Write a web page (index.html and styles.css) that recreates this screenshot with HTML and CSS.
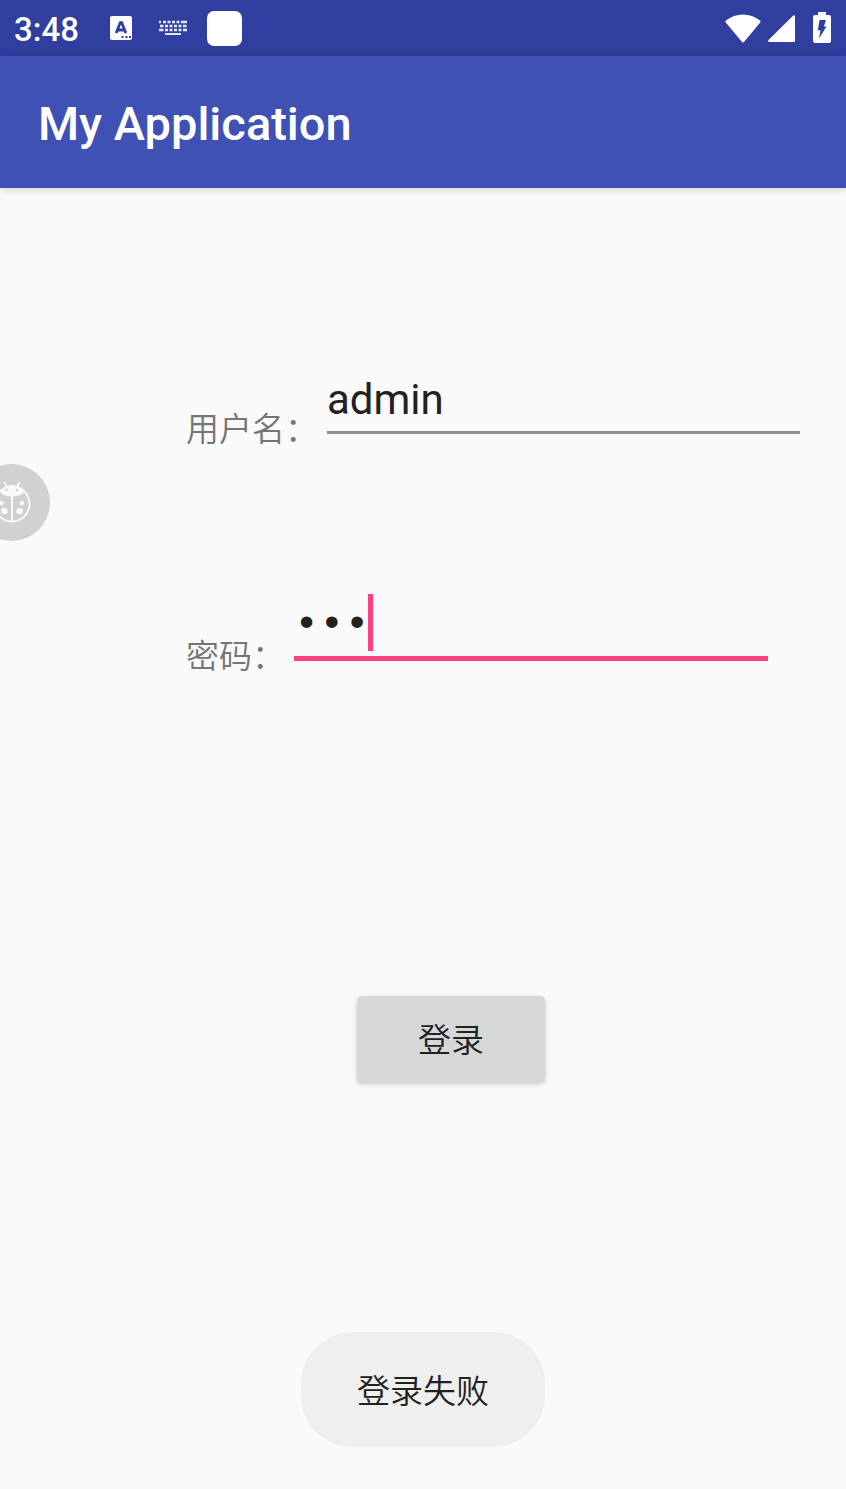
FILE: index.html
```html
<!DOCTYPE html>
<html lang="zh-CN">
<head>
<meta charset="utf-8">
<meta name="viewport" content="width=device-width, initial-scale=1">
<title>My Application</title>
<link rel="stylesheet" href="styles.css">
</head>
<body>
<div class="screen">
  <div class="status-bar">
    <time class="clock">3:48</time>
    <div class="notifications">
      <svg class="icon-a" width="24" height="26" viewBox="0 0 24 26" aria-hidden="true">
        <rect x="1" y="1" width="22" height="24" rx="2" fill="#fff"/>
        <path d="M7.200 18 11.300 7.600h1.400L16.800 18M8.700 15h6.600" fill="none" stroke="#303f9f" stroke-width="2.800"/>
        <path d="M12.500 21h2v2h-2zM16.500 21h2v2h-2zM20 21h2v2h-2z" fill="#303f9f"/>
      </svg>
      <svg class="icon-keyboard" width="28" height="16" viewBox="0 0 28 16" aria-hidden="true">
        <path d="M0 2h2M4 2h3M8.500 2h3M13 2h3M17.500 2h3M22 2h6M1 6h3.500M6 6h3M10.500 6h3M15 6h3M19.500 6h3M24 6h3.500M0 10h4.500M6 10h3M10.500 10h3M15 10h3M19.500 10h3M24 10h4" fill="none" stroke="#e4e6f4" stroke-width="2.600"/>
        <path d="M6 14h16" stroke="#e4e6f4" stroke-width="2"/>
      </svg>
      <span class="icon-square"></span>
    </div>
    <div class="system-icons">
      <svg class="icon-wifi" width="36" height="29" viewBox="0 0 36 29" aria-hidden="true">
        <path d="M1 6.500C10.500-1.500 25.500-1.500 35 6.500q1 1 .2 2L19.200 27.800q-1.200 1.200-2.400 0L.8 8.500q-.8-1 .2-2z" fill="#fff"/>
      </svg>
      <svg class="icon-signal" width="28" height="28" viewBox="0 0 28 28" aria-hidden="true">
        <path d="M1 27q-1.500-.5-.5-2L25 .8q2-1.200 2 .8v24.400q0 1-1 1z" fill="#fff"/>
      </svg>
      <svg class="icon-battery" width="18" height="31" viewBox="0 0 18 31" aria-hidden="true">
        <path d="M5 0h8v3h3q2 0 2 2v24q0 2-2 2H2q-2 0-2-2V5q0-2 2-2h3z" fill="#fff"/>
        <path d="M6.500 8h6.400l-2 6.500h2.600L6 26.500l1.500-8.200H4.800z" fill="#303f9f"/>
      </svg>
    </div>
  </div>
  <header class="app-bar"><h1 class="app-title">My Application</h1></header>
  <form class="login-form">
    <div class="field">
      <label class="field-label" for="username">用户名：</label>
      <div class="field-control"><input class="field-input" id="username" type="text" value="admin"></div>
    </div>
    <div class="field">
      <label class="field-label" for="password">密码：</label>
      <div class="field-control">
        <input class="field-input field-input-active" id="password" type="password" value="123">
        <span class="cursor"></span>
      </div>
    </div>
    <button class="login-button" type="button">登录</button>
  </form>
  <button class="debug-bubble" type="button" aria-label="Debug">
    <svg width="40" height="44" viewBox="0 0 40 44" aria-hidden="true">
      <circle cx="20" cy="23" r="17.500" fill="none" stroke="#fafafa" stroke-width="2"/>
      <path d="M12 1l3.500 5M28 1l-3.500 5" stroke="#fafafa" stroke-width="1.600"/>
      <path d="M8 11C11 2 29 2 32 11 27 17 13 17 8 11z" fill="#fafafa"/>
      <path d="M20 14v27" stroke="#fafafa" stroke-width="2"/>
      <circle cx="14.500" cy="9" r="1.300" fill="#d1d1d1"/><circle cx="25" cy="9" r="1.300" fill="#d1d1d1"/>
      <g fill="#fafafa"><circle cx="9.500" cy="22" r="2.300"/><circle cx="30" cy="22" r="2.300"/><circle cx="12.500" cy="30" r="3.200"/><circle cx="27.500" cy="30" r="3.200"/></g>
    </svg>
  </button>
  <div class="toast" role="status">登录失败</div>
</div>
</body>
</html>
```

FILE: styles.css
```css
* {
  box-sizing: border-box;
}

body {
  margin: 0;
  background: #fafafa;
  color: #212121;
  font-family: Roboto, "Noto Sans CJK SC", sans-serif;
}

.screen {
  position: relative;
  min-height: 100vh;
  overflow: hidden;
}

.status-bar {
  display: flex;
  align-items: center;
  height: 56px;
  padding: 0 15px 0 14px;
  background: #303f9f;
  color: #fff;
}

.clock {
  font-size: 33px;
  font-weight: 500;
  line-height: 40px;
  padding-top: 4px;
}

.notifications {
  display: flex;
  align-items: center;
  margin-left: 30px;
}

.icon-keyboard {
  margin: 0 20px 0 26px;
}

.icon-square {
  width: 35px;
  height: 35px;
  border-radius: 7px;
  background: #fff;
}

.system-icons {
  display: flex;
  align-items: flex-end;
  margin-left: auto;
  padding-bottom: 2px;
}

.icon-signal {
  margin: 0 17px 0 7px;
}

.app-bar {
  display: flex;
  align-items: center;
  height: 132px;
  padding: 4px 38px 0;
  background: #3f51b5;
  color: #fff;
  box-shadow: 0 1px 8px rgba(0, 0, 0, 0.2);
}

.app-title {
  margin: 0;
  font-size: 47px;
  font-weight: 500;
  line-height: 56px;
}

.login-form {
  display: flex;
  flex-direction: column;
  padding: 179px 46px 0 186px;
}

.field {
  display: flex;
  align-items: flex-end;
  gap: 9px;
  margin-bottom: 144px;
}

.field-label {
  flex: none;
  padding-bottom: 3px;
  color: #757575;
  font-family: "Noto Sans CJK SC", sans-serif;
  font-size: 33px;
  font-weight: 350;
  line-height: 40px;
}

.field-control {
  position: relative;
  flex: 0 1 474px;
  min-width: 0;
  margin-bottom: 16px;
}

.field-input {
  display: block;
  width: 100%;
  height: 67px;
  padding: 0;
  border: 0;
  border-bottom: 3px solid #919191;
  border-radius: 0;
  outline: 0;
  background: transparent;
  color: #212121;
  font-family: inherit;
  font-size: 42px;
}

.field-input-active {
  border-bottom: 5px solid #ff4081;
  font-family: "Liberation Mono", monospace;
}

.cursor {
  position: absolute;
  top: 0;
  left: 74px;
  width: 5px;
  height: 57px;
  background: #ff4081;
}

.login-button {
  width: 188px;
  height: 86px;
  margin: 175px 0 0 171px;
  padding: 0 0 2px;
  border: 0;
  border-radius: 5px;
  background: #d6d7d7;
  color: #212121;
  font-family: inherit;
  font-size: 33px;
  font-weight: 350;
  box-shadow: 0 2px 5px rgba(0, 0, 0, 0.2);
}

.debug-bubble {
  position: absolute;
  top: 464px;
  left: -27px;
  display: flex;
  align-items: center;
  justify-content: center;
  width: 77px;
  height: 77px;
  padding: 0;
  border: 0;
  border-radius: 50%;
  background: #d1d1d1;
}

.toast {
  position: absolute;
  bottom: 42px;
  left: 50%;
  transform: translateX(-50%);
  padding: 40px 56px 35px;
  border-radius: 52px;
  background: #efefef;
  font-size: 33px;
  font-weight: 350;
  line-height: 40px;
  white-space: nowrap;
}
```
